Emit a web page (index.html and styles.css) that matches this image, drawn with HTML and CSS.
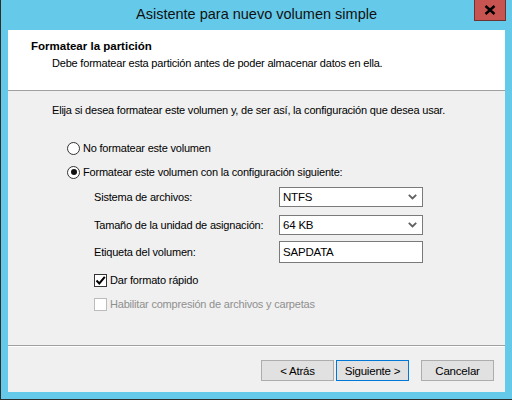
FILE: index.html
```html
<!DOCTYPE html>
<html lang="es">
<head>
<meta charset="utf-8">
<title>Asistente para nuevo volumen simple</title>
<link rel="stylesheet" href="styles.css">
</head>
<body>
<div class="window">
  <div class="titlebar">
    <span class="title">Asistente para nuevo volumen simple</span>
    <div class="close">
      <svg width="12" height="10" viewBox="0 0 12 10"><path d="M1.5 1 L10.5 9 M10.5 1 L1.5 9" stroke="#000" stroke-width="2.4"/></svg>
    </div>
  </div>
  <div class="content">
    <div class="header">
      <div class="h-title">Formatear la partición</div>
      <div class="h-sub">Debe formatear esta partición antes de poder almacenar datos en ella.</div>
    </div>
    <div class="main">
      <div class="line intro">Elija si desea formatear este volumen y, de ser así, la configuración que desea usar.</div>
      <div class="line radio-row first">
        <span class="radio"></span><span>No formatear este volumen</span>
      </div>
      <div class="line radio-row">
        <span class="radio checked"><span class="dot"></span></span><span>Formatear este volumen con la configuración siguiente:</span>
      </div>
      <div class="field f1">
        <span class="label">Sistema de archivos:</span>
        <div class="select"><span>NTFS</span>
          <svg width="9" height="6" viewBox="0 0 9 6"><path d="M0.8 0.8 L4.5 4.5 L8.2 0.8" fill="none" stroke="#606060" stroke-width="1.8"/></svg>
        </div>
      </div>
      <div class="field f2">
        <span class="label">Tamaño de la unidad de asignación:</span>
        <div class="select"><span>64 KB</span>
          <svg width="9" height="6" viewBox="0 0 9 6"><path d="M0.8 0.8 L4.5 4.5 L8.2 0.8" fill="none" stroke="#606060" stroke-width="1.8"/></svg>
        </div>
      </div>
      <div class="field f3">
        <span class="label">Etiqueta del volumen:</span>
        <div class="textbox">SAPDATA</div>
      </div>
      <div class="line check-row c1">
        <span class="check"><svg width="11" height="11" viewBox="0 0 11 11"><path d="M1.5 5.5 L4.3 8.5 L9.8 1.8" fill="none" stroke="#000" stroke-width="2"/></svg></span><span>Dar formato rápido</span>
      </div>
      <div class="line check-row c2 disabled">
        <span class="check off"></span><span>Habilitar compresión de archivos y carpetas</span>
      </div>
    </div>
    <div class="footer">
      <button class="btn">&lt; Atrás</button>
      <button class="btn primary">Siguiente &gt;</button>
      <button class="btn cancel">Cancelar</button>
    </div>
  </div>
</div>
</body>
</html>
```
FILE: styles.css
```css
* { box-sizing: border-box; }
html, body { margin: 0; padding: 0; }
body {
  width: 512px;
  height: 400px;
  overflow: hidden;
  font-family: "Liberation Sans", Arial, sans-serif;
  font-size: 11px;
  letter-spacing: -0.2px;
  color: #000;
}
.window {
  width: 512px;
  height: 400px;
  background: #65caea;
  border-left: 1px solid #2d2d2d;
  border-bottom: 1px solid #2d2d2d;
  padding: 0 7px 7px 7px;
  display: flex;
  flex-direction: column;
}
.titlebar {
  height: 30px;
  position: relative;
  display: flex;
  align-items: center;
  justify-content: center;
  padding-bottom: 2px;
}
.title {
  font-size: 14.5px;
  letter-spacing: 0;
  color: #111;
}
.close {
  position: absolute;
  right: -1px;
  top: 0;
  width: 32px;
  height: 21px;
  background: #c75450;
  border: 1px solid #6d3330;
  border-top: none;
  display: flex;
  align-items: center;
  justify-content: center;
}
.content {
  flex: 1;
  background: #f0f0f0;
  display: flex;
  flex-direction: column;
}
.header {
  height: 61px;
  background: #fff;
  border-bottom: 1px solid #a0a0a0;
  padding: 8px 0 0 23px;
}
.h-title {
  font-weight: bold;
  font-size: 11.5px;
  letter-spacing: 0;
  height: 16px;
  line-height: 16px;
}
.h-sub {
  margin-left: 21px;
  margin-top: 1px;
  height: 16px;
  line-height: 16px;
}
.main {
  flex: 1;
  padding: 10px 0 0 44px;
  display: flex;
  flex-direction: column;
}
.line {
  height: 18px;
  display: flex;
  align-items: center;
  white-space: nowrap;
}
.radio-row { margin-left: 15px; margin-top: 6px; }
.radio-row.first { margin-top: 20px; }
.radio {
  width: 13px;
  height: 13px;
  border: 1px solid #333;
  border-radius: 50%;
  background: #fff;
  margin-right: 3px;
  display: flex;
  align-items: center;
  justify-content: center;
}
.dot {
  width: 6px;
  height: 6px;
  background: #111;
  border-radius: 50%;
}
.field {
  display: flex;
  align-items: center;
  margin-left: 42px;
  white-space: nowrap;
}
.f1 { margin-top: 6px; }
.f2 { margin-top: 8px; }
.f3 { margin-top: 6px; }
.label { width: 185px; }
.select, .textbox {
  width: 144px;
  background: #fff;
  border: 1px solid #7a7a7a;
  display: flex;
  align-items: center;
  padding-left: 3px;
  font-size: 11.5px;
}
.select {
  height: 20px;
  justify-content: space-between;
  padding-right: 5px;
}
.textbox { height: 22px; }
.check-row { margin-left: 42px; }
.c1 { margin-top: 8px; }
.c2 { margin-top: 6px; }
.check {
  width: 13px;
  height: 13px;
  border: 1px solid #333;
  background: #fff;
  margin-right: 3px;
  display: flex;
  align-items: center;
  justify-content: center;
}
.check.off { border-color: #bcbcbc; }
.disabled { color: #8f8f8f; }
.footer {
  height: 47px;
  border-top: 1px solid #a0a0a0;
  box-shadow: inset 0 1px 0 #fff;
  display: flex;
  align-items: flex-start;
  justify-content: flex-end;
  padding: 14px 11px 0 0;
}
.btn {
  width: 73px;
  height: 21px;
  background: #e1e1e1;
  border: 1px solid #adadad;
  font-family: inherit;
  font-size: 11.5px;
  letter-spacing: -0.2px;
  color: #000;
  padding: 0;
  margin: 0 0 0 2px;
}
.btn.primary { border-color: #0078d7; }
.btn.cancel { margin-left: 12px; }
```
